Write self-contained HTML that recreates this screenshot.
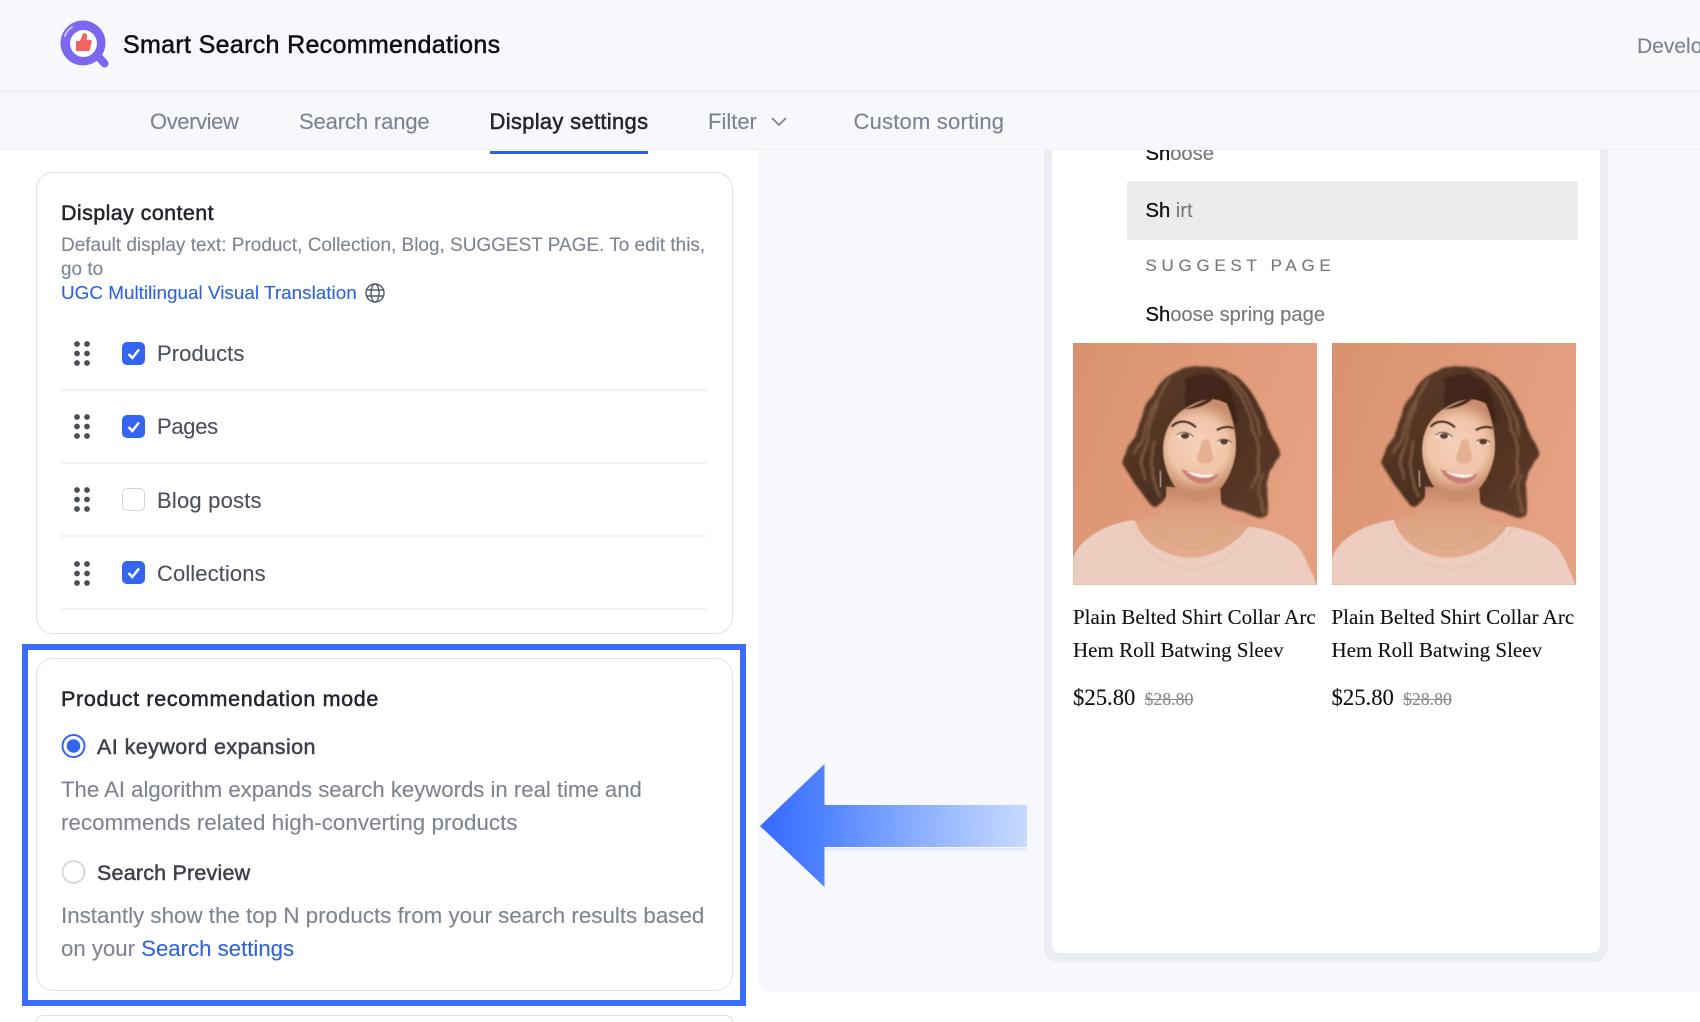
<!DOCTYPE html>
<html lang="en"><head><meta charset="utf-8"><title>Smart Search Recommendations</title>
<style>
html,body{margin:0;padding:0;background:#fff}
#p{position:relative;width:1700px;height:1022px;overflow:hidden;background:#fff;font-family:"Liberation Sans",sans-serif;filter:blur(.35px)}
#p div,#p span.a,#p svg.a{position:absolute}
.t{white-space:nowrap;line-height:30px;-webkit-text-stroke:.12px currentColor}
.t.m{-webkit-text-stroke:.5px currentColor}
.g{color:#7d8492}
.b{color:#2f63dc}
.l{color:#4b505c;font-size:22px}
.tab{top:106.500px;font-size:22px;color:#7b8291}
.sep{left:61px;width:646px;height:2px;background:#f1f2f4}
.card{box-sizing:border-box;border:1.5px solid #dfe1e6;border-radius:17px;background:#fff}
.cb{left:122px;width:23px;height:23px;border-radius:5px;background:#3465f2}
.cb svg{position:absolute;left:0;top:0}
.pt{font-family:"Liberation Serif",serif;font-size:21px;color:#111}
.s{font-size:20.200px;color:#777}
.s b{font-weight:400;color:#111;-webkit-text-stroke:.3px #111}
</style></head><body><div id="p">
<svg width="0" height="0" style="position:absolute"><defs>
<linearGradient id="bg" x1="0" y1="0" x2="1" y2=".4"><stop offset="0" stop-color="#d9926f"/><stop offset="1" stop-color="#e4a182"/></linearGradient>
<radialGradient id="fc" gradientUnits="userSpaceOnUse" cx="385" cy="320" r="135"><stop offset="0" stop-color="#f5d2bb"/><stop offset=".65" stop-color="#f0c5a9"/><stop offset="1" stop-color="#c98d6d"/></radialGradient>
<linearGradient id="nk" x1="0" y1="0" x2="0" y2="1"><stop offset="0" stop-color="#c58665"/><stop offset=".35" stop-color="#dba181"/><stop offset="1" stop-color="#e4ad90"/></linearGradient>
<linearGradient id="hr" x1="0" y1="0" x2="1" y2="1"><stop offset="0" stop-color="#5f3e2b"/><stop offset=".5" stop-color="#4c2f20"/><stop offset="1" stop-color="#5f3c29"/></linearGradient>
<filter id="hw" x="-10%" y="-10%" width="120%" height="120%"><feTurbulence type="fractalNoise" baseFrequency=".018" numOctaves="2" seed="7" result="n"/><feDisplacementMap in="SourceGraphic" in2="n" scale="16"/><feGaussianBlur stdDeviation="3"/></filter>
<filter id="f3"><feGaussianBlur stdDeviation="3"/></filter>
<filter id="f6"><feGaussianBlur stdDeviation="8"/></filter>
<filter id="f1"><feGaussianBlur stdDeviation="1.300"/></filter>
<filter id="fa"><feGaussianBlur stdDeviation="1.800"/></filter>
<symbol id="woman" viewBox="10 8 730 728" preserveAspectRatio="none">
<rect x="10" y="8" width="730" height="728" fill="url(#bg)"/>
<g filter="url(#hw)">
<path d="M300 102C350 78 430 66 500 108C560 160 585 230 592 262C612 300 632 330 626 345C618 375 604 385 598 395C586 440 596 500 590 524C582 540 565 538 545 528C510 515 480 505 450 490L285 470C275 498 258 512 240 492C205 445 180 415 160 372C162 340 185 305 205 270C218 215 240 150 300 102Z" fill="url(#hr)"/>
<path d="M430 85C500 125 535 195 548 270C575 330 572 395 540 445M470 100C530 150 560 220 570 290M300 115C250 180 240 250 195 345M265 170C250 270 200 340 225 420M250 300C240 360 240 420 270 470M575 400C560 440 570 490 580 520" fill="none" stroke="#8a6249" stroke-width="8" opacity=".7"/>
<path d="M345 115C400 95 440 100 470 130C490 160 498 200 500 250L345 205Z" fill="#3d2618" opacity=".8"/>
</g>
<g filter="url(#fa)">
<path d="M288 440L452 450C450 490 458 520 482 545L532 562C500 612 440 652 360 654C280 652 215 602 197 540L252 530C280 510 292 480 288 440Z" fill="url(#nk)"/>
<path d="M10 736L10 655C30 598 100 552 195 540C212 604 282 652 360 654C440 652 504 606 534 560C594 566 660 590 692 632C712 670 730 710 738 736Z" fill="#edcdc0"/>
<path d="M190 548C205 630 285 684 365 686C445 684 520 628 548 566" fill="none" stroke="#e4bfb1" stroke-width="4" opacity=".7"/>
<path d="M250 530C255 585 320 625 360 626C410 622 460 590 474 535" fill="none" stroke="#d4a868" stroke-width="3.500"/>
<path d="M345 205C385 180 425 165 470 190C490 235 500 285 497 335C490 400 450 472 388 488C335 482 296 430 282 360C272 300 290 240 345 205Z" fill="url(#fc)"/>
<path d="M345 208C385 190 420 175 442 163C420 192 385 205 345 208Z" fill="#4a2e1e"/>
<path d="M305 260C325 238 355 240 378 262" fill="none" stroke="#3c2418" stroke-width="7"/>
<path d="M440 270C458 260 476 258 490 264" fill="none" stroke="#3c2418" stroke-width="7"/>
<ellipse cx="344" cy="288" rx="24" ry="10" fill="#fff" opacity=".5"/>
<ellipse cx="345" cy="288" rx="13" ry="8.500" fill="#5d3d2c"/>
<path d="M320 285C335 272 355 275 370 290" fill="none" stroke="#3c2418" stroke-width="3"/>
<ellipse cx="462" cy="307" rx="21" ry="9" fill="#fff" opacity=".45"/>
<ellipse cx="462" cy="306" rx="12" ry="8" fill="#5d3d2c"/>
<path d="M442 304C455 295 472 295 484 308" fill="none" stroke="#3c2418" stroke-width="3"/>
<path d="M380 355C388 376 420 378 430 356C426 335 422 315 416 296L398 300Z" fill="#d9997a" opacity=".55"/>
<path d="M333 388C365 396 410 408 445 402C432 428 405 434 385 430C360 424 345 408 333 388Z" fill="#cb7f73"/>
<path d="M348 394C375 400 410 406 436 403C420 418 380 418 348 394Z" fill="#fbf2ec"/>
<path d="M271 392L272 442" stroke="#e6d8c8" stroke-width="3"/>
</g>
</symbol>
</defs></svg>

<!-- right panel -->
<div style="left:758px;top:140px;width:942px;height:852px;background:#f6f8fc;border-radius:0 0 0 14px"></div>
<div style="left:1044px;top:130px;width:564px;height:832px;background:#eaedf2;border-radius:0 0 14px 14px"></div>
<div style="left:1052px;top:130px;width:548px;height:823px;background:#fff;border-radius:0 0 8px 8px"></div>
<div class="t s" style="left:1145.500px;top:139px"><b>Sh</b>oose</div>
<div style="left:1127px;top:181px;width:451px;height:59px;background:#ececec;border-radius:2px"></div>
<div class="t s" style="left:1145.500px;top:196px"><b>Sh</b> irt</div>
<div class="t" style="left:1145.500px;top:251px;font-size:17px;letter-spacing:4.700px;color:#777">SUGGEST PAGE</div>
<div class="t s" style="left:1145.500px;top:300px"><b>Sh</b>oose spring page</div>
<svg class="a" style="left:1073px;top:343px" width="244" height="242"><use href="#woman" width="244" height="242"/></svg>
<svg class="a" style="left:1331.500px;top:343px" width="244" height="242"><use href="#woman" width="244" height="242"/></svg>
<div class="t pt" style="left:1073px;top:602px">Plain Belted Shirt Collar Arc</div>
<div class="t pt" style="left:1073px;top:634.500px">Hem Roll Batwing Sleev</div>
<div class="t" style="left:1073px;top:683px;font-family:'Liberation Serif',serif;font-size:22.700px;color:#111">$25.80</div>
<div class="t" style="left:1144.500px;top:684px;font-family:'Liberation Serif',serif;font-size:17.800px;color:#8a8a8a;text-decoration:line-through">$28.80</div>
<div class="t pt" style="left:1331.500px;top:602px">Plain Belted Shirt Collar Arc</div>
<div class="t pt" style="left:1331.500px;top:634.500px">Hem Roll Batwing Sleev</div>
<div class="t" style="left:1331.500px;top:683px;font-family:'Liberation Serif',serif;font-size:22.700px;color:#111">$25.80</div>
<div class="t" style="left:1403px;top:684px;font-family:'Liberation Serif',serif;font-size:17.800px;color:#8a8a8a;text-decoration:line-through">$28.80</div>

<!-- arrow -->
<svg class="a" style="left:755px;top:760px" width="280" height="135" viewBox="755 760 280 135">
<defs><linearGradient id="ar" gradientUnits="userSpaceOnUse" x1="760" y1="0" x2="1027" y2="0"><stop offset="0" stop-color="#3569ff"/><stop offset=".25" stop-color="#5285ff"/><stop offset=".6" stop-color="#8cafff"/><stop offset="1" stop-color="#c8dbff"/></linearGradient></defs>
<rect x="825" y="848" width="202" height="3" fill="#e6ebf8"/>
<path d="M760 826L824.500 764V805H1027V847H824.500V887Z" fill="url(#ar)"/>
</svg>

<!-- header -->
<div style="left:0;top:0;width:1700px;height:90px;background:#f7f8fc"></div>
<div style="left:0;top:90px;width:1700px;height:2px;background:#eff0f4"></div>
<div style="left:0;top:92px;width:1700px;height:57px;background:#f7f8fc"></div>
<div style="left:0;top:149px;width:1700px;height:1px;background:#eff0f4"></div>
<svg class="a" style="left:58px;top:20px" width="52" height="50" viewBox="58 20 52 50">
<path d="M97 55L104.500 63.500" stroke="#7e67ef" stroke-width="8" stroke-linecap="round"/>
<circle cx="83" cy="43" r="22.500" fill="#7e67ef"/>
<circle cx="83.500" cy="43.500" r="13.500" fill="#fff"/>
<path d="M65 36C66 32 69 29 72 27" stroke="#c9bdfb" stroke-width="2" fill="none" stroke-linecap="round"/>
<path d="M76 41H80L83 33.500C85.500 32.500 87.500 34 87 37L86.500 40H90.500C91.500 40 92 41 91.700 42L90 49.500C89.700 50.500 89 51 88 51H76Z" fill="#f4635f"/>
</svg>
<div class="t m" style="left:123px;top:30px;font-size:25px;letter-spacing:.33px;color:#0d0e12">Smart Search Recommendations</div>
<div class="t" style="left:1637px;top:31.500px;font-size:21px;color:#7b8291">Develo</div>
<div class="t tab" style="left:150px;letter-spacing:-.4px">Overview</div>
<div class="t tab" style="left:299px;letter-spacing:-.13px">Search range</div>
<div class="t tab m" style="left:489.500px;color:#23262e;letter-spacing:.3px">Display settings</div>
<div class="t tab" style="left:708px">Filter</div>
<svg class="a" style="left:770px;top:115px" width="18" height="14"><path d="M2 3L9 10L16 3" fill="none" stroke="#7b8291" stroke-width="1.700"/></svg>
<div class="t tab" style="left:853.500px;letter-spacing:.2px">Custom sorting</div>
<div style="left:490px;top:151px;width:158px;height:2.500px;background:#2e62e0"></div>

<!-- card 1 -->
<div class="card" style="left:36px;top:172px;width:696.500px;height:461.500px"></div>
<div class="t m" style="left:61px;top:198px;font-size:21.500px;letter-spacing:.4px;color:#23262e">Display content</div>
<div class="t g" style="left:61px;top:231px;font-size:18.980px">Default display text: Product, Collection, Blog, SUGGEST PAGE. To edit this,</div>
<div class="t g" style="left:61px;top:255px;font-size:18.980px">go to</div>
<div class="t b" style="left:61px;top:279px;font-size:18.900px">UGC Multilingual Visual Translation</div>
<svg class="a" style="left:364px;top:282px" width="22" height="22" viewBox="0 0 22 22" fill="none" stroke="#555b67" stroke-width="1.400"><circle cx="11" cy="11" r="9"/><ellipse cx="11" cy="11" rx="4" ry="9"/><path d="M2 8H20M2 14H20"/></svg>

<svg width="0" height="0" style="position:absolute"><defs>
<g id="dots" fill="#4a4e57"><circle cx="3" cy="3" r="2.900"/><circle cx="13" cy="3" r="2.900"/><circle cx="3" cy="12.500" r="2.900"/><circle cx="13" cy="12.500" r="2.900"/><circle cx="3" cy="22" r="2.900"/><circle cx="13" cy="22" r="2.900"/></g>
<path id="chk" d="M6.500 12L10.300 16L17 7.500" fill="none" stroke="#fff" stroke-width="2.500"/>
</defs></svg>

<svg class="a" style="left:74px;top:341px" width="16" height="25"><use href="#dots"/></svg>
<div class="cb" style="top:342px"><svg width="23" height="23"><use href="#chk"/></svg></div>
<div class="t l" style="left:157px;top:338.500px;letter-spacing:.08px">Products</div>
<div class="sep" style="top:389px"></div>
<svg class="a" style="left:74px;top:414px" width="16" height="25"><use href="#dots"/></svg>
<div class="cb" style="top:415px"><svg width="23" height="23"><use href="#chk"/></svg></div>
<div class="t l" style="left:157px;top:412px;letter-spacing:-.3px">Pages</div>
<div class="sep" style="top:462px"></div>
<svg class="a" style="left:74px;top:487px" width="16" height="25"><use href="#dots"/></svg>
<div class="cb" style="top:488px;box-sizing:border-box;background:#fff;border:1.500px solid #d3d6dc"></div>
<div class="t l" style="left:157px;top:485.500px;letter-spacing:.2px">Blog posts</div>
<div class="sep" style="top:535px"></div>
<svg class="a" style="left:74px;top:561px" width="16" height="25"><use href="#dots"/></svg>
<div class="cb" style="top:561px"><svg width="23" height="23"><use href="#chk"/></svg></div>
<div class="t l" style="left:157px;top:558.500px;letter-spacing:.1px">Collections</div>
<div class="sep" style="top:608px"></div>

<!-- frame + card 2 -->
<div style="left:22px;top:644px;width:724px;height:362px;box-sizing:border-box;border:6px solid #3b6cff"></div>
<div class="card" style="left:36px;top:658px;width:696.500px;height:333px"></div>
<div class="t m" style="left:61px;top:684px;font-size:21.500px;letter-spacing:.67px;color:#23262e">Product recommendation mode</div>
<svg class="a" style="left:60px;top:733px" width="27" height="26"><circle cx="13.500" cy="13" r="11" fill="#fff" stroke="#3465f2" stroke-width="2"/><circle cx="13.500" cy="13" r="6.800" fill="#3465f2"/></svg>
<div class="t m" style="left:97px;top:732px;font-size:21.500px;letter-spacing:.43px;color:#3d414b">AI keyword expansion</div>
<div class="t g" style="left:61px;top:775px;font-size:22.150px">The AI algorithm expands search keywords in real time and</div>
<div class="t g" style="left:61px;top:808px;font-size:22.300px;letter-spacing:.07px">recommends related high-converting products</div>
<svg class="a" style="left:60px;top:859px" width="27" height="26"><circle cx="13.500" cy="13" r="11" fill="#fff" stroke="#d3d6dc" stroke-width="1.800"/></svg>
<div class="t m" style="left:97px;top:858px;font-size:21.500px;letter-spacing:.2px;color:#3d414b">Search Preview</div>
<div class="t g" style="left:61px;top:901px;font-size:22.350px">Instantly show the top N products from your search results based</div>
<div class="t g" style="left:61px;top:934px;font-size:22.200px">on your <span class="b">Search settings</span></div>

<!-- card 3 -->
<div class="card" style="left:36px;top:1015px;width:696.500px;height:7px;border-bottom:none;border-radius:17px 17px 0 0"></div>
</div></body></html>
